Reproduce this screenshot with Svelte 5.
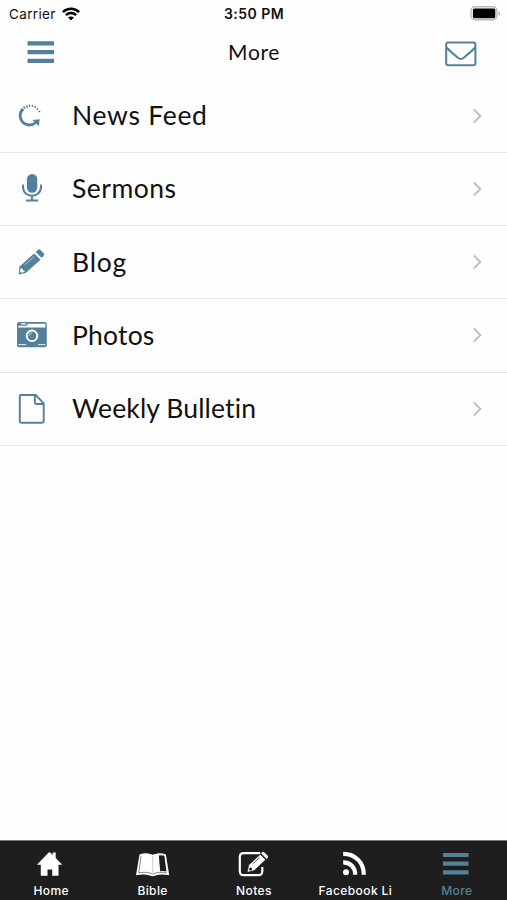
<script>
  const items = [
    { label: 'News Feed', icon: 'refresh', spacing: 0.7 },
    { label: 'Sermons', icon: 'mic', spacing: 0.5 },
    { label: 'Blog', icon: 'pencil', spacing: 0.8 },
    { label: 'Photos', icon: 'camera', spacing: 0.2 },
    { label: 'Weekly Bulletin', icon: 'page', spacing: 0.13 }
  ];

  const tabs = [
    { label: 'Home', icon: 'home' },
    { label: 'Bible', icon: 'book' },
    { label: 'Notes', icon: 'note' },
    { label: 'Facebook Li', icon: 'feed' },
    { label: 'More', icon: 'menu' }
  ];

  let active = 'More';
</script>

<div class="screen">
  <div class="status">
    <div class="carrier">
      <span>Carrier</span>
      <svg width="18" height="14" viewBox="0 0 18 14">
        <g fill="none" stroke="#000" stroke-width="2.5">
          <path d="M.9 5.1C5.5.6 12.5.6 17.1 5.1" />
          <path d="M3.9 8.2c2.9-2.8 7.3-2.8 10.2 0" />
        </g>
        <path d="M6.1 10.5c1.7-1.5 4.1-1.5 5.8 0L9 13.5z" />
      </svg>
    </div>
    <span class="time">3:50 PM</span>
    <svg class="battery" width="31" height="15" viewBox="0 0 31 15">
      <rect x="1" y=".8" width="26" height="13" rx="4" fill="#fff" stroke="#b8b8b8" stroke-width="1.4" />
      <rect x="2.9" y="2.5" width="22.4" height="9.7" rx="1.5" />
      <path d="M28.7 5.2c1.8.8 1.8 3.8 0 4.6z" fill="#aaa" />
    </svg>
  </div>

  <header>
    <svg class="burger" width="28" height="24" viewBox="0 0 28 24">
      <path d="M.5 3.3h26.5M.5 12.1h26.5M.5 20.9h26.5" stroke="#53809b" stroke-width="4.3" />
    </svg>
    <h1>More</h1>
    <svg class="mail" width="32" height="26" viewBox="0 0 32 26">
      <g fill="none" stroke="#53809b" stroke-width="2">
        <rect x="1.2" y="1.5" width="29.2" height="22.8" rx="2.2" />
        <path d="M1.5 6.5c3 3.3 7.5 7 11.5 10.3 1.9 1.5 3.7 1.5 5.6 0 4-3.3 8.5-7 11.5-10.3" />
      </g>
    </svg>
  </header>

  <div class="list">
    {#each items as item}
      <div class="row">
        <svg class="icon" width="40" height="40" viewBox="0 0 40 40">
          {#if item.icon == 'refresh'}
            <path d="M11.2 12.9A9.2 9.2 0 0 0 23.4 26.7" fill="none" stroke="#53809b" stroke-width="2.8" />
            <path d="M20.5 24.1l7.2-.8-.9 7z" fill="#53809b" />
            <path d="M11.5 10.3l1.8 2.4M14.5 9.2l1.1 2.4M17.4 8.6l.3 2.2M20.7 9l-.5 1.9M23.7 10.2l-1 1.6M26.2 12.5l-1.5 1.1M28.2 15.2l-1.7.7" stroke="#53809b" stroke-width="1.4" />
          {:else if item.icon == 'mic'}
            <rect x="14.9" y="4.9" width="10.4" height="18.8" rx="5.2" fill="#53809b" />
            <path d="M11 15.5v2.5c0 11.6 18 11.6 18 0v-2.5M20 26.5v5M14 31.6h12.2" fill="none" stroke="#53809b" stroke-width="2" />
          {:else if item.icon == 'pencil'}
            <path d="M22.2 11.4l6.3 6.3L13.7 31l-7 1.4.7-7.7z" fill="#53809b" />
            <path d="M23.7 10l2.4-2.2q1.2-1 2.4.2l3.2 3.2q1.2 1.2.1 2.4l-2.1 2.3z" fill="#53809b" />
            <path d="M12.8 22.9l9.2-8.3" stroke="#b6cbd6" stroke-width="1" />
            <path d="M8.6 26.3l2 .4.4 1.7 1.8.3-.4 1.4-3.2.6-1.2-1.1z" fill="#fff" />
          {:else if item.icon == 'camera'}
            <rect x="5" y="7" width="29.8" height="25.2" rx="2" fill="#53809b" />
            <path d="M6.3 10.7h8.2l1.5-2h17.4v3.8H6.3z" fill="#fff" />
            <path d="M9 8.8h5" stroke="#fff" stroke-width="1.2" />
            <path d="M6.3 29.6h8M26 29.6h7.4" stroke="#e5eef2" stroke-width="1" />
            <circle cx="20" cy="20.8" r="7.5" fill="#53809b" />
            <circle cx="20" cy="20.8" r="5.3" fill="#53809b" stroke="#fff" stroke-width="1.9" />
            <path d="M17.3 20.5q.3-2.2 2.5-2.4" fill="none" stroke="#d7e3e9" stroke-width="1" />
          {:else}
            <path d="M9 6h14.7l8 8.3v17.5q0 2-2 2H9.6q-1.8 0-1.8-1.8V7.2Q7.8 6 9 6z" fill="none" stroke="#53809b" stroke-width="1.9" />
            <path d="M22.8 6v7.5q0 1.5 1.5 1.5h7.3" fill="none" stroke="#53809b" stroke-width="1.9" />
          {/if}
        </svg>
        <span class="label" style="letter-spacing: {item.spacing}px">{item.label}</span>
        <svg class="chevron" width="10" height="16" viewBox="0 0 10 16">
          <path d="M1.8 1.4L8.3 8l-6.5 6.6" fill="none" stroke="#bfbfbf" stroke-width="2" />
        </svg>
      </div>
    {/each}
  </div>

  <nav>
    {#each tabs as tab}
      <div class="tab" class:active={tab.label == active}>
        <svg width="40" height="32" viewBox="0 0 40 32" fill="currentColor">
          {#if tab.icon == 'home'}
            <path d="M6 16.7L17.2 5q1.3-1.3 2.600 0l1.900 2V4.500h3v5.500l6.500 6.700h-3.700v11h-6.300v-6.300h-4.700v6.300H9.800v-11z" />
          {:else if tab.icon == 'book'}
            <path d="M7.5 6.500q7-2.800 13.200.3 6.200-3.100 13.200-.3l3.300 20.800q-8.500-1.500-13.700.2-2.800 1.300-5.600 0-5.200-1.700-13.900-.2z" />
            <path d="M9 8.200L6.800 24.800q8.500-1.500 13.900 1.300 5.400-2.800 14-1.300" fill="none" stroke="#555" stroke-width=".7" />
            <path d="M20.700 8.200v16.500" stroke="#aaa" stroke-width=".6" />
            <path d="M26.800 7.500q2.900-.6 5.600.2l2 15.700q-3.200-.5-6.200-.2z" fill="#1e1e1e" />
          {:else if tab.icon == 'note'}
            <path d="M26.2 5.200H9.800q-4 0-4 4v14q0 4 4 4h14.500q4 0 4-4V19" fill="none" stroke="currentColor" stroke-width="2.200" />
            <path d="M26.300 6.300l5.500 5.400L20.300 22.600l-7.300 1.900 1.600-7.400z" stroke="#1e1e1e" stroke-width=".8" />
            <path d="M27.100 5.300l1-1q1-.9 2.100 0l3.500 3.400q1 1.100 0 2.200l-1.100 1.100z" />
            <path d="M18.800 15.700l7-6.200" stroke="#555" stroke-width="1" />
            <path d="M15.800 19.500l2 .5.300 1.900-2 .5-1.200-.9z" fill="#1e1e1e" />
          {:else if tab.icon == 'feed'}
            <circle cx="11" cy="24.300" r="3" />
            <path d="M8.200 14.300c7.200 0 12 5 12 12.500M8.200 5.800c12 0 20.600 8.500 20.600 21" fill="none" stroke="currentColor" stroke-width="4.200" />
          {:else}
            <path d="M6.900 7h25.600M6.900 15.600h25.600M6.900 24.300h25.600" stroke="currentColor" stroke-width="4.200" />
          {/if}
        </svg>
        <span>{tab.label}</span>
      </div>
    {/each}
  </nav>
</div>

<style>
  :global(body) {
    background: #fff;
  }

  .screen {
    display: flex;
    flex-direction: column;
    width: 507px;
    height: 900px;
    overflow: hidden;
    background: #fefefe;
    color: #111;
    font-family: Lato, sans-serif;
  }

  .status {
    display: grid;
    grid-template-columns: 1fr auto 1fr;
    align-items: center;
    height: 27px;
    padding: 0 6px 0 9px;
    font-family: Inter, sans-serif;
    font-size: 13.5px;
  }

  .carrier {
    display: flex;
    align-items: center;
    gap: 6px;
    letter-spacing: 0.35px;
  }

  .time {
    margin-right: 2px;
    font-size: 14px;
    font-weight: 600;
    letter-spacing: 0.45px;
  }

  .battery {
    justify-self: end;
    margin-top: -1px;
  }

  header {
    display: grid;
    grid-template-columns: 1fr auto 1fr;
    align-items: center;
    height: 52px;
    padding: 0 30px 0 27px;
  }

  .burger {
    margin-bottom: 2px;
  }

  h1 {
    margin: -2px -2px 0 2px;
    font-size: 21px;
    font-weight: 400;
    line-height: 52px;
    letter-spacing: 0.6px;
  }

  .mail {
    justify-self: end;
    margin-top: 2px;
  }

  .list {
    flex: 1;
    padding-top: 0.5px;
  }

  .row {
    display: flex;
    align-items: center;
    box-sizing: border-box;
    height: 73.25px;
    padding: 0 25px 0 12px;
    border-bottom: 1px solid #e6e6e6;
  }

  .label {
    flex: 1;
    margin-top: -1px;
    padding-left: 20px;
    font-size: 26.5px;
    line-height: 36px;
    white-space: nowrap;
  }

  nav {
    display: flex;
    box-sizing: border-box;
    height: 60px;
    border-top: 1px solid #777;
    background: #1e1e1e;
  }

  .tab {
    display: flex;
    flex: 1;
    flex-direction: column;
    align-items: center;
    padding-top: 7px;
    color: #fff;
    font-family: Inter, sans-serif;
    font-size: 12px;
    font-weight: 500;
    line-height: 15px;
    letter-spacing: 0.4px;
  }

  .tab span {
    margin: 3px 0 0 1px;
    white-space: nowrap;
  }

  .active {
    color: #53809b;
  }
</style>
